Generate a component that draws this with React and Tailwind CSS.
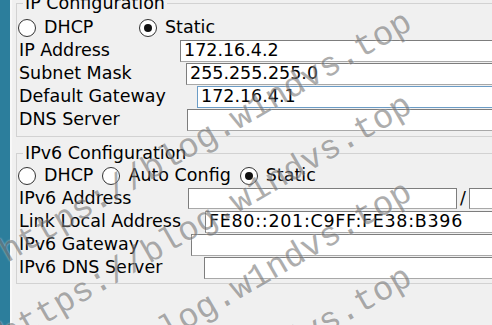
import React from "react";

const MARK = "https://blog.w1ndvs.top";

// where each watermark line ends (baseline, right end)
const MARK_LINES = [
  { x: 414, y: 28 },
  { x: 414, y: 111 },
  { x: 414, y: 198 },
  { x: 414, y: 283 },
];

function Radio({ checked }) {
  return (
    <span className="w-[18px] h-[18px] rounded-full border-[1.5px] border-[#333] bg-white flex items-center justify-center shrink-0">
      {checked && <span className="w-[8px] h-[8px] rounded-full bg-[#111]" />}
    </span>
  );
}

function RadioItem({ label, checked, className = "" }) {
  return (
    <div className={`flex items-center gap-[8px] ${className}`}>
      <Radio checked={checked} />
      <span>{label}</span>
    </div>
  );
}

function Field({ label, labelW, value, focused, valueClass = "" }) {
  return (
    <div className="flex items-center h-[23px]">
      <span className={`${labelW} pl-[2px] shrink-0 whitespace-nowrap`}>{label}</span>
      <div
        className={`flex-1 h-[22px] bg-white border flex items-center pl-[3px] whitespace-nowrap ${
          focused ? "border-[#6b9cc6]" : "border-[#7d7d7d] border-b-[#a8a8a8]"
        }`}
      >
        <span className={valueClass}>{value}</span>
      </div>
    </div>
  );
}

function Group({ title, className = "", children }) {
  return (
    <fieldset className={`border border-[#d2d2d2] w-[520px] ml-[4px] ${className}`}>
      <legend className="ml-[6px] px-[2px] leading-[20px] whitespace-nowrap">{title}</legend>
      {children}
    </fieldset>
  );
}

export default function App() {
  return (
    <div className="relative w-[492px] h-[325px] overflow-hidden flex bg-[#f0f0f0] text-black font-['DejaVu_Sans',sans-serif] text-[17.5px]">
      <div className="w-[10px] shrink-0 bg-[#2c7e9c]" />
      <div className="w-[2px] shrink-0 bg-[#f8f8f8]" />

      <div className="flex-1 flex flex-col">
        <Group title="IP Configuration" className="-mt-[7px] pt-[3px] pb-[5px]">
          <div className="flex items-center h-[23px] pl-[1px]">
            <RadioItem label="DHCP" className="w-[121px]" />
            <RadioItem label="Static" checked />
          </div>
          <Field label="IP Address" labelW="w-[163px]" value="172.16.4.2" />
          <Field label="Subnet Mask" labelW="w-[169px]" value="255.255.255.0" />
          <Field label="Default Gateway" labelW="w-[180px]" value="172.16.4.1" focused />
          <Field label="DNS Server" labelW="w-[170px]" value="" />
        </Group>

        <Group title="IPv6 Configuration" className="mt-[6px] pt-[1px] pb-[4px]">
          <div className="flex items-center h-[23px] pl-[1px] gap-[9px]">
            <RadioItem label="DHCP" />
            <RadioItem label="Auto Config" />
            <RadioItem label="Static" checked />
          </div>
          <div className="flex items-center h-[23px]">
            <span className="w-[171px] pl-[2px] shrink-0 whitespace-nowrap">IPv6 Address</span>
            <div className="w-[269px] h-[21px] bg-white border border-[#7d7d7d] border-b-[#a8a8a8]" />
            <span className="w-[12px] text-center">/</span>
            <div className="flex-1 h-[21px] bg-white border border-[#7d7d7d] border-b-[#a8a8a8]" />
          </div>
          <Field
            label="Link Local Address"
            labelW="w-[188px]"
            value="FE80::201:C9FF:FE38:B396"
            valueClass="tracking-[0.7px]"
          />
          <Field label="IPv6 Gateway" labelW="w-[174px]" value="" />
          <Field label="IPv6 DNS Server" labelW="w-[187px]" value="" />
        </Group>
      </div>

      {/* watermark */}
      <div className="absolute inset-0 pointer-events-none">
        {MARK_LINES.map((l, i) => (
          <div
            key={i}
            className="absolute w-0 h-0 origin-top-left -rotate-[30deg]"
            style={{ left: l.x, top: l.y }}
          >
            <span className="absolute right-0 bottom-[-8px] whitespace-nowrap font-['Liberation_Mono',monospace] text-[34px] leading-none text-[#777] opacity-60 [text-shadow:0_0_2px_#fff]">
              {MARK}
            </span>
          </div>
        ))}
      </div>
    </div>
  );
}
